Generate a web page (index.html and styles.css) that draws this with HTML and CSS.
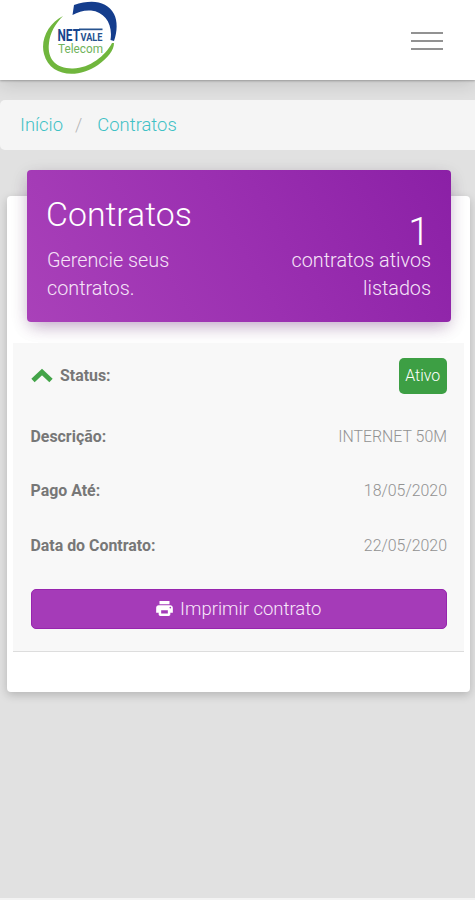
FILE: index.html
```html
<!DOCTYPE html>
<html lang="pt-BR">
<head>
<meta charset="utf-8">
<meta name="viewport" content="width=device-width, initial-scale=1">
<title>Contratos</title>
<link rel="stylesheet" href="styles.css">
</head>
<body>
<header class="topbar">
  <svg class="logo" viewBox="0 0 76 76" role="img" aria-label="NETvale Telecom">
    <path d="M20 16C6 23-3 39 1 54C7 77 35 79 55 65C65 58 71 50 71 43L69 43C62 56 47 68 30 68.500C12 69 4 58 6 43C7 33 12 24 20 16Z" fill="#70b63d"/>
    <path d="M29.500 15L31 5C49-1 64 1 71 14C75 22 74 32 71 41L67.500 40C70 24 62 12 48 10.500C41 10 35 12 29.500 15Z" fill="#143d8d"/>
    <rect x="36" y="28.500" width="23.500" height="1.700" fill="#27538f"/>
    <text class="logo-net" x="14.500" y="41" textLength="22.500" lengthAdjust="spacingAndGlyphs">NET</text>
    <text class="logo-vale" x="37.500" y="41" textLength="22" lengthAdjust="spacingAndGlyphs">VALE</text>
    <text class="logo-telecom" x="15" y="53.200" textLength="45" lengthAdjust="spacingAndGlyphs">Telecom</text>
  </svg>
  <button class="menu" aria-label="Menu"><span></span><span></span><span></span></button>
</header>
<nav class="breadcrumb"><a>Início</a><span class="slash">/</span><a>Contratos</a></nav>
<main class="card">
  <section class="banner">
    <div>
      <h1>Contratos</h1>
      <p>Gerencie seus<br>contratos.</p>
    </div>
    <div class="summary">
      <strong>1</strong>
      <p>contratos ativos<br>listados</p>
    </div>
  </section>
  <section class="contract">
    <div class="row status">
      <span class="label"><svg class="chevron" viewBox="0 0 22 15"><path d="M2 12.500L11 4L20 12.500" fill="none" stroke="#43a449" stroke-width="4.800"/></svg>Status:</span>
      <span class="badge">Ativo</span>
    </div>
    <div class="row"><span class="label">Descrição:</span><span class="value">INTERNET 50M</span></div>
    <div class="row"><span class="label">Pago Até:</span><span class="value">18/05/2020</span></div>
    <div class="row"><span class="label">Data do Contrato:</span><span class="value">22/05/2020</span></div>
    <button class="print">
      <svg class="printer" viewBox="2 3 20 18"><path fill="#fff" d="M19 8H5c-1.660 0-3 1.340-3 3v6h3v2c0 1.100.9 2 2 2h10c1.100 0 2-.9 2-2v-2h3v-6c0-1.660-1.340-3-3-3zm-3 10H8v-4h8v4zm3-6c-.55 0-1-.45-1-1s.45-1 1-1 1 .45 1 1-.45 1-1 1zm-1-9H6v4h12V3z"/></svg><span>Imprimir contrato</span>
    </button>
  </section>
</main>
</body>
</html>
```
FILE: styles.css
```css
* { box-sizing: border-box; }
html { background: #e1e1e1; }
body {
  margin: 0;
  min-height: 900px;
  font-family: Roboto, "Liberation Sans", sans-serif;
  font-weight: 300;
  background: #e1e1e1;
  border-bottom: 2px solid #f3f3f3;
  overflow-x: hidden;
}
h1, p { margin: 0; font-weight: 300; }
button { font: inherit; }
.topbar {
  height: 80px;
  padding: 0 32px 0 43px;
  display: flex;
  justify-content: space-between;
  background: #fff;
  box-shadow: 0 1px 2px rgba(0,0,0,.25), 0 4px 18px rgba(0,0,0,.14);
}
.logo { width: 76px; height: 76px; }
.logo-net { font: 700 16.5px/1 Roboto, sans-serif; fill: #17458d; }
.logo-vale { font: 700 11px/1 Roboto, sans-serif; fill: #27538f; }
.logo-telecom { font: 400 12.5px/1 Roboto, sans-serif; fill: #70b35b; }
.menu {
  width: 32px;
  height: 18px;
  margin-top: 32px;
  padding: 0;
  border: 0;
  background: none;
  display: flex;
  flex-direction: column;
  justify-content: space-between;
}
.menu span { height: 2px; width: 32px; background: #929292; }
.breadcrumb {
  height: 50px;
  margin-top: 20px;
  padding-left: 20px;
  display: flex;
  align-items: center;
  border-radius: 5px 0 0 5px;
  background: #f5f5f5;
  color: #3fc1c5;
  font-size: 18.4px;
  line-height: 28px;
}
.slash { margin: 0 15px 0 12px; color: #b5b5b5; }
.card {
  height: 496px;
  margin: 46px 5px 0 7px;
  padding: 0 6px;
  display: flow-root;
  border-radius: 4px;
  background: #fff;
  box-shadow: 0 3px 10px rgba(0,0,0,.2);
}
.banner {
  height: 152px;
  margin: -26px 13px 0 14px;
  padding: 0 20px;
  display: flex;
  justify-content: space-between;
  border-radius: 4px;
  background: linear-gradient(60deg, #a941b9, #9b30b1 50%, #8b20a6);
  box-shadow: 0 7px 16px -5px rgba(130,40,150,.36), 0 5px 18px rgba(0,0,0,.12);
  color: #f6e4f8;
  font-size: 19.8px;
  line-height: 28px;
}
.banner h1 { margin: 25px 0 12px -1px; font-size: 33.8px; line-height: 40px; color: #fff; }
.summary { text-align: right; }
.summary strong { display: block; margin: 42px 1px -5px 0; font-size: 39px; line-height: 40px; font-weight: 300; color: #fff; }
.contract {
  height: 309px;
  margin-top: 21px;
  padding: 5px 17px 0 17.5px;
  border-bottom: 1px solid #ddd;
  background: #f8f8f8;
}
.row {
  height: 54.500px;
  display: flex;
  align-items: center;
  justify-content: space-between;
  font-size: 15.9px;
}
.status { height: 61px; padding-bottom: 6px; }
.label { display: flex; align-items: center; font-weight: 700; color: #777; }
.chevron { width: 22px; height: 15px; margin-right: 7.5px; }
.value { color: #929292; }
.badge {
  width: 48.5px;
  height: 36px;
  border-radius: 5px;
  background: #3d9f44;
  color: #fff;
  text-align: center;
  line-height: 36px;
}
.print {
  width: 100%;
  height: 40px;
  margin-top: 16px;
  padding: 0;
  display: flex;
  align-items: center;
  justify-content: center;
  gap: 7px;
  border: 1px solid #9725ae;
  border-radius: 5px;
  background: #a53bb8;
  color: #f8e9fa;
  font-size: 18.5px;
}
.printer { width: 17px; height: 15px; }
```
